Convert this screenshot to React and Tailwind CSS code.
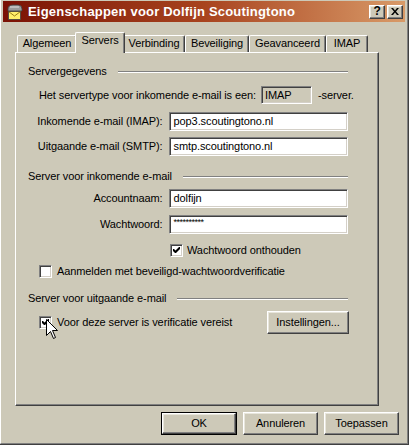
import React from "react";

const raised = "border-t border-l border-t-white border-l-white border-r border-b border-r-[#404040] border-b-[#404040] shadow-[inset_-1px_-1px_0_#808080,inset_1px_1px_0_#e8e6dc]";
const sunken = "border-t border-l border-t-[#808080] border-l-[#808080] border-r border-b border-r-white border-b-white shadow-[inset_1px_1px_0_#404040,inset_-1px_-1px_0_#d4d0c8]";

const Check = ({ checked }) => (
  <div className={`w-[13px] h-[13px] bg-white shrink-0 flex items-center justify-center ${sunken}`}>
    {checked && (
      <svg width="7" height="7" viewBox="0 0 7 7">
        <path d="M0 2 L0 4 L2 6 L3 6 L7 2 L7 0 L6 0 L2.5 3.5 L1 2 Z" fill="#000" />
      </svg>
    )}
  </div>
);

const Field = ({ value, className = "" }) => (
  <div className={`w-[180px] h-[19px] bg-white flex items-center pl-[4px] ${sunken} ${className}`}>
    {value}
  </div>
);

const GroupHead = ({ children }) => (
  <div className="flex items-center h-[13px]">
    <span className="whitespace-nowrap">{children}</span>
    <div className="flex-1 ml-[11px] h-[2px] border-t border-t-[#808080] border-b border-b-white" />
  </div>
);

const Tab = ({ label, w, active }) =>
  active ? (
    <div className={`relative z-10 h-[21px] -mx-[2px] -mb-[1px] bg-[#cdc9b8] border-t border-l border-t-white border-l-white border-r border-r-[#404040] rounded-t-[2px] shadow-[inset_-1px_0_0_#808080] flex justify-center pt-[1px] ${w}`}>
      {label}
    </div>
  ) : (
    <div className={`h-[17px] border-t border-l border-t-white border-l-white border-r border-r-[#404040] rounded-t-[2px] shadow-[inset_-1px_0_0_#808080] flex justify-center pt-[1px] ${w}`}>
      {label}
    </div>
  );

export default function App() {
  return (
    <div
      className="relative w-[409px] h-[445px] bg-[#cdc9b8] border-r border-b border-r-[#404040] border-b-[#404040] text-[11px] tracking-[-0.1px] text-black leading-[13px]"
      style={{ fontFamily: '"Liberation Sans", Arial, sans-serif' }}
    >
      <div className="h-full border-l border-l-white border-r border-b border-r-[#808080] border-b-[#808080] pt-[1px] px-[2px] flex flex-col">
        {/* title bar */}
        <div className="h-[21px] bg-linear-to-r from-[#7a1005] via-[#a8431e] to-[#d89a68] flex items-center pl-[3px] pr-[2px]">
          <svg width="17" height="16" viewBox="0 0 17 16" className="shrink-0">
            <path d="M2 5 Q2 1 7 1 L12 1 Q16 1 16 5 L16 7 L2 7 Z" fill="#9a9a9a" stroke="#404040" strokeWidth="0.8" />
            <path d="M4 3 L13 3" stroke="#e0e0e0" strokeWidth="1" />
            <rect x="2.5" y="7.5" width="12" height="8" fill="#ffef6a" stroke="#404040" strokeWidth="0.8" />
            <path d="M2.5 7.5 L8.5 12 L14.5 7.5" fill="none" stroke="#806000" strokeWidth="0.8" />
          </svg>
          <span className="ml-[5px] text-white font-bold text-[13px] tracking-[0.2px] whitespace-nowrap">
            Eigenschappen voor Dolfijn Scoutingtono
          </span>
          <div className="ml-auto flex gap-[2px]">
            <div className={`w-[16px] h-[14px] bg-[#cdc9b8] flex items-center justify-center font-bold text-[12px] ${raised}`}>?</div>
            <div className={`w-[16px] h-[14px] bg-[#cdc9b8] flex items-center justify-center ${raised}`}>
              <svg width="8" height="7" viewBox="0 0 8 7">
                <path d="M0 0 L2 0 L4 2.5 L6 0 L8 0 L5 3.5 L8 7 L6 7 L4 4.5 L2 7 L0 7 L3 3.5 Z" fill="#000" />
              </svg>
            </div>
          </div>
        </div>

        {/* tabs */}
        <div className="mt-[10px] ml-[14px] flex items-end h-[20px]">
          <Tab label="Algemeen" w="w-[60px]" />
          <Tab label="Servers" w="w-[50px]" active />
          <Tab label="Verbinding" w="w-[62px]" />
          <Tab label="Beveiliging" w="w-[64px]" />
          <Tab label="Geavanceerd" w="w-[77px]" />
          <Tab label="IMAP" w="w-[42px]" />
        </div>

        {/* panel */}
        <div className="ml-[12px] w-[364px] h-[354px] border-t border-l border-t-white border-l-white border-r border-b border-r-[#404040] border-b-[#404040] shadow-[inset_-1px_-1px_0_#808080] pl-[12px] pr-[30px] flex flex-col">
          <div className="mt-[12px]">
            <GroupHead>Servergegevens</GroupHead>
          </div>
          <div className="mt-[8px] ml-[11px] flex items-center h-[18px] whitespace-nowrap">
            <span>Het servertype voor inkomende e-mail is een:</span>
            <div className={`ml-[5px] w-[51px] h-[18px] shrink-0 flex items-center pl-[3px] ${sunken}`}>IMAP</div>
            <span className="ml-[6px]">-server.</span>
          </div>
          <div className="mt-[8px] flex items-center">
            <span className="w-[135px] text-right whitespace-nowrap">Inkomende e-mail (IMAP):</span>
            <Field value="pop3.scoutingtono.nl" className="ml-[6px]" />
          </div>
          <div className="mt-[6px] flex items-center">
            <span className="w-[135px] text-right whitespace-nowrap">Uitgaande e-mail (SMTP):</span>
            <Field value="smtp.scoutingtono.nl" className="ml-[6px]" />
          </div>

          <div className="mt-[14px]">
            <GroupHead>Server voor inkomende e-mail</GroupHead>
          </div>
          <div className="mt-[6px] flex items-center">
            <span className="w-[135px] text-right">Accountnaam:</span>
            <Field value="dolfijn" className="ml-[6px]" />
          </div>
          <div className="mt-[7px] flex items-center">
            <span className="w-[135px] text-right">Wachtwoord:</span>
            <Field value={<span className="text-[9px] tracking-[-0.5px] -mt-[4px]">**********</span>} className="ml-[6px]" />
          </div>
          <div className="mt-[10px] ml-[142px] flex items-center">
            <Check checked />
            <span className="ml-[4px]">Wachtwoord onthouden</span>
          </div>
          <div className="mt-[8px] ml-[11px] flex items-center">
            <Check />
            <span className="ml-[5px] whitespace-nowrap">Aanmelden met beveiligd-wachtwoordverificatie</span>
          </div>

          <div className="mt-[14px]">
            <GroupHead>Server voor uitgaande e-mail</GroupHead>
          </div>
          <div className="mt-[6px] ml-[11px] flex items-center h-[23px]">
            <Check checked />
            <span className="ml-[5px] whitespace-nowrap">Voor deze server is verificatie vereist</span>
            <div className={`ml-auto -mr-[1px] w-[82px] h-[23px] flex items-center justify-center ${raised}`}>
              Instellingen...
            </div>
          </div>
        </div>

        {/* buttons */}
        <div className="mt-[6px] flex justify-end pr-[6px] gap-[6px]">
          <div className="w-[76px] h-[23px] border border-black">
            <div className={`w-full h-full flex items-center justify-center ${raised}`}>OK</div>
          </div>
          <div className={`w-[75px] h-[23px] flex items-center justify-center ${raised}`}>Annuleren</div>
          <div className={`w-[75px] h-[23px] flex items-center justify-center ${raised}`}>Toepassen</div>
        </div>
      </div>

      {/* mouse cursor */}
      <svg width="13" height="21" viewBox="0 0 13 21" className="absolute left-[46px] top-[319px] z-20">
        <path d="M0.5 0.5 L0.5 16.5 L4.5 12.5 L7.5 19.5 L9.5 18.5 L6.5 11.5 L11.5 11.5 Z" fill="#fff" stroke="#000" strokeWidth="1" />
      </svg>
    </div>
  );
}
